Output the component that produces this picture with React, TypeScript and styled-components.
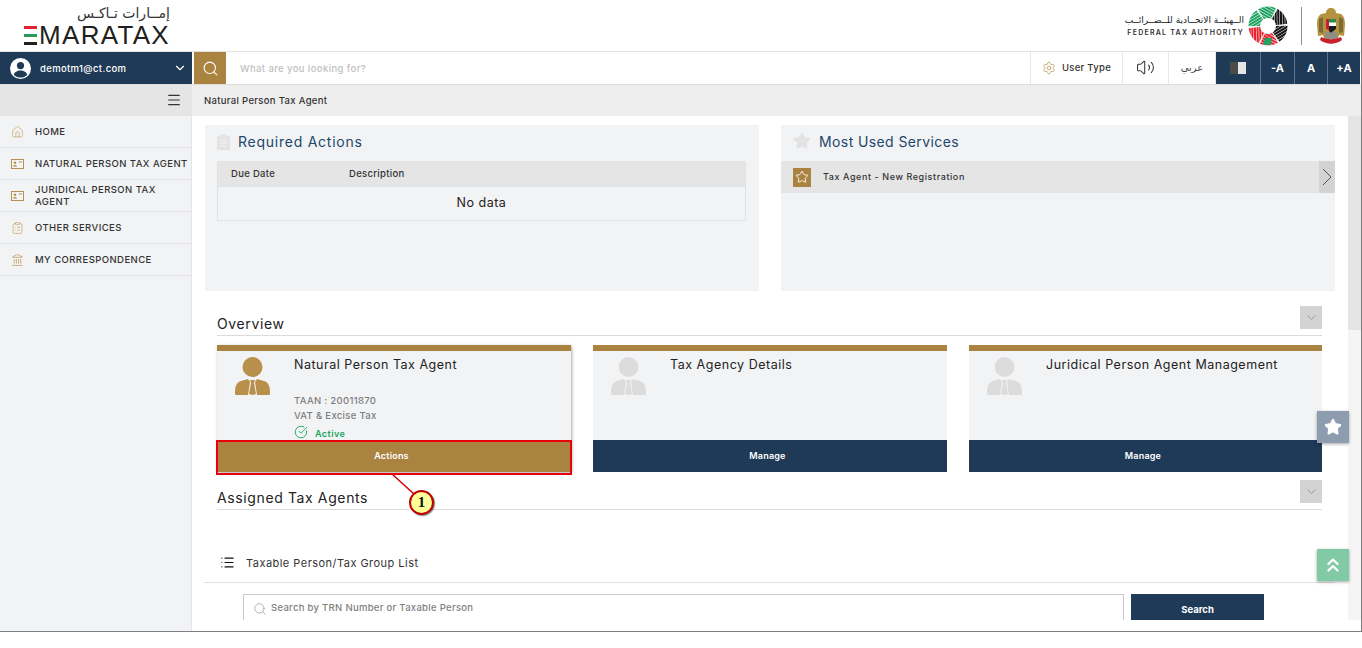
import React from 'react';
import styled, { createGlobalStyle } from 'styled-components';
import {
  Search,
  Settings,
  Volume2,
  ChevronDown,
  Menu,
  Home,
  ClipboardList,
  Landmark,
  List,
  CircleCheckBig,
  Star,
  ChevronsUp,
} from 'lucide-react';

const NAVY = '#1f3a57';
const GOLD = '#ab8340';
const FONT = `Inter, "Open Sans", "Liberation Sans", sans-serif`;
const ARABIC = `"DejaVu Sans", sans-serif`;

const GlobalStyle = createGlobalStyle`
  html, body {
    margin: 0;
    padding: 0;
    background: #fff;
    font-family: ${FONT};
    overflow: hidden;
  }
  * { box-sizing: border-box; }
`;

const Frame = styled.div`
  position: relative;
  width: 1362px;
  height: 632px;
  display: flex;
  flex-direction: column;
  border-bottom: 1px solid #808080;
  border-right: 1px solid #808080;
  overflow: hidden;
`;

const Header = styled.header`
  height: 52px;
  flex: none;
  display: flex;
  justify-content: space-between;
  padding: 0 15px 0 24px;
  border-bottom: 1px solid #e2e2e2;
`;

const LogoBlock = styled.div`
  width: 146px;
  display: flex;
  flex-direction: column;
  align-items: flex-end;
`;

const LogoArabic = styled.div`
  font-family: ${ARABIC};
  font-size: 14px;
  line-height: 14px;
  margin-top: 6px;
  height: 19px;
  color: #333;
`;

const LogoLatin = styled.div`
  display: flex;
  align-items: center;
  width: 146px;
  height: 20px;
  font-family: "Liberation Sans", sans-serif;
  font-size: 26px;
  line-height: 20px;
  letter-spacing: 1.3px;
  color: #231f20;
  white-space: nowrap;
`;

const Stripes = styled.span`
  display: inline-flex;
  flex-direction: column;
  justify-content: space-between;
  width: 14px;
  height: 19px;
  margin-right: 2px;
`;

const Stripe = styled.i<{ $c: string }>`
  display: block;
  height: 3px;
  background: ${p => p.$c};
`;

const AuthorityBlock = styled.div`
  display: flex;
  align-items: center;
`;

const AuthorityText = styled.div`
  display: flex;
  flex-direction: column;
  align-items: flex-end;
  width: 118px;
  margin-right: 4px;
  padding-top: 1px;
`;

const AuthorityArabic = styled.div`
  font-family: ${ARABIC};
  font-size: 9px;
  line-height: 13px;
  color: #222;
  white-space: nowrap;
`;

const AuthorityLatin = styled.div`
  font-size: 7px;
  font-weight: 600;
  line-height: 11px;
  letter-spacing: 1.25px;
  color: #333;
  white-space: nowrap;
`;

const HeaderRule = styled.div`
  width: 1px;
  height: 38px;
  background: #8d8d8d;
  margin: 0 14px 0 13px;
`;

const Bar = styled.div`
  position: relative;
  height: 32px;
  flex: none;
  display: flex;
  background: #fff;
  box-shadow: 0 1px 0 #dcdcdc;
`;

const UserBox = styled.div`
  width: 192px;
  flex: none;
  background: ${NAVY};
  color: #fff;
  display: flex;
  align-items: center;
  padding: 0 5px 0 10px;
  font-size: 9.5px;
  font-weight: 500;
  letter-spacing: 0.35px;
`;

const UserName = styled.span`
  margin-left: 9px;
  flex: 1;
`;

const SearchButton = styled.div`
  width: 32px;
  margin-left: 2px;
  flex: none;
  background: ${GOLD};
  display: flex;
  align-items: center;
  justify-content: center;
  color: #fff;
`;

const SearchPrompt = styled.div`
  flex: 1;
  display: flex;
  align-items: center;
  padding-left: 14px;
  font-size: 9.5px;
  font-weight: 500;
  letter-spacing: 0.4px;
  color: #c0c0c0;
`;

const ToolCell = styled.div<{ $w: number }>`
  width: ${p => p.$w}px;
  flex: none;
  display: flex;
  align-items: center;
  justify-content: center;
  gap: 6px;
  padding-bottom: 1px;
  border-left: 1px solid #e6e6e6;
  font-size: 9.5px;
  font-weight: 500;
  letter-spacing: 0.3px;
  color: #333;
`;

const ArabicLabel = styled.span`
  font-family: ${ARABIC};
  font-size: 10px;
  color: #444;
`;

const ToolDark = styled.div<{ $w: number; $split?: boolean }>`
  width: ${p => p.$w}px;
  flex: none;
  display: flex;
  align-items: center;
  justify-content: center;
  background: ${NAVY};
  color: #fff;
  font-size: 11px;
  font-weight: 700;
  border-left: 1px solid ${p => (p.$split ? '#5d7389' : '#e6e6e6')};
`;

const ContrastIcon = styled.span`
  display: flex;
  width: 16px;
  height: 12px;
`;

const ContrastHalf = styled.i<{ $c: string }>`
  display: block;
  flex: 1;
  background: ${p => p.$c};
`;

const BarEnd = styled.div`
  width: 1px;
  flex: none;
`;

const Body = styled.div`
  flex: 1;
  display: flex;
  min-height: 0;
`;

const Sidebar = styled.aside`
  width: 192px;
  flex: none;
  background: #f2f3f5;
  border-right: 1px solid #e4e4e4;
`;

const SidebarTop = styled.div`
  height: 32px;
  background: #e5e5e5;
  display: flex;
  align-items: center;
  justify-content: flex-end;
  padding-right: 9px;
  color: #333;
`;

const NavItem = styled.div`
  height: 32px;
  display: flex;
  align-items: center;
  padding-left: 11px;
  border-bottom: 1px solid #e4e4e4;
  color: #c7a368;
`;

const NavIcon = styled.span`
  width: 13px;
  display: flex;
  justify-content: center;
  flex: none;
  margin-right: 11px;
`;

const NavLabel = styled.span`
  font-size: 9.5px;
  line-height: 11.5px;
  font-weight: 500;
  letter-spacing: 0.44px;
  color: #333;
  white-space: pre;
`;

const Main = styled.main`
  flex: 1;
  min-width: 0;
  display: flex;
  flex-direction: column;
`;

const Breadcrumb = styled.div`
  height: 32px;
  flex: none;
  background: #eeeeee;
  display: flex;
  align-items: center;
  padding: 1px 0 0 12px;
  font-size: 9.5px;
  font-weight: 500;
  letter-spacing: 0.32px;
  color: #333;
`;

const Viewport = styled.div`
  height: 504px;
  flex: none;
  display: flex;
`;

const Content = styled.div`
  flex: 1;
  min-width: 0;
  overflow: hidden;
  padding: 9px 13px 0 13px;
`;

const Scrollbar = styled.div`
  width: 13px;
  flex: none;
  background: #f5f5f5;
`;

const ScrollThumb = styled.div`
  height: 214px;
  background: #e4e4e4;
`;

const PanelRow = styled.div`
  display: grid;
  grid-template-columns: 554px 554px;
  justify-content: space-between;
`;

const Panel = styled.section`
  height: 166px;
  background: #f2f3f5;
`;

const PanelHead = styled.div<{ $spacing: number }>`
  height: 36px;
  display: flex;
  align-items: center;
  padding: 0 0 4px 12px;
  gap: 8px;
  font-size: 14px;
  font-weight: 400;
  letter-spacing: ${p => p.$spacing}px;
  color: #24466b;
`;

const ReqTable = styled.div`
  margin: 0 13px 0 12px;
  border: 1px solid #dfe2e8;
  border-top: none;
`;

const ReqHead = styled.div`
  height: 26px;
  background: #e5e5e5;
  display: flex;
  align-items: center;
  font-size: 9.5px;
  font-weight: 500;
  letter-spacing: 0.3px;
  color: #333;
  border-bottom: 1px solid #dde1e8;
`;

const ReqCol = styled.span<{ $w: number }>`
  width: ${p => p.$w}px;
  padding-left: 13px;
`;

const NoData = styled.div`
  height: 33px;
  display: flex;
  align-items: center;
  justify-content: center;
  padding-bottom: 2px;
  font-size: 12.5px;
  letter-spacing: 0.5px;
  color: #222;
`;

const ServiceRow = styled.div`
  height: 32px;
  background: #e5e5e5;
  display: flex;
  align-items: center;
  padding-left: 12px;
  font-size: 9px;
  font-weight: 500;
  letter-spacing: 0.58px;
  color: #333;
`;

const ServiceBadge = styled.span`
  width: 18px;
  height: 19px;
  background: ${GOLD};
  display: flex;
  align-items: center;
  justify-content: center;
  margin-right: 12px;
  color: #fff;
`;

const ServiceName = styled.span`
  flex: 1;
  margin-bottom: 1px;
`;

const ServiceArrow = styled.span`
  width: 16px;
  height: 100%;
  background: #d3d3d3;
  display: flex;
  align-items: center;
  justify-content: center;
  color: #555;
`;

const SectionHead = styled.div<{ $top: number }>`
  margin: ${p => p.$top}px 13px 0 12px;
  height: 30px;
  display: flex;
  align-items: flex-end;
  justify-content: space-between;
  padding-bottom: 4px;
  border-bottom: 1px solid #dcdcdc;
  font-size: 14px;
  letter-spacing: 0.62px;
  color: #222;
  line-height: 16px;
`;

const SectionTitle = styled.span`
  margin-bottom: -1px;
`;

const Collapse = styled.span`
  width: 22px;
  height: 23px;
  background: #d3d3d3;
  display: flex;
  align-items: center;
  justify-content: center;
  color: #777;
  margin-bottom: 2px;
`;

const Cards = styled.div`
  margin: 9px 13px 0 12px;
  display: grid;
  grid-template-columns: 354px 354px 353px;
  column-gap: 22px;
`;

const Card = styled.article<{ $raised?: boolean }>`
  height: 127px;
  display: flex;
  flex-direction: column;
  border-top: 6px solid ${GOLD};
  background: #f2f3f5;
  box-shadow: ${p => (p.$raised ? '1px 1px 3px rgba(0,0,0,.35)' : 'none')};
`;

const CardBody = styled.div`
  flex: 1;
  min-height: 0;
  display: flex;
  padding: 6px 0 0 18px;
`;

const CardAvatar = styled.div<{ $c: string }>`
  width: 35px;
  flex: none;
  color: ${p => p.$c};
`;

const CardInfo = styled.div`
  margin-left: 24px;
  display: flex;
  flex-direction: column;
`;

const CardTitle = styled.div`
  font-size: 12.5px;
  line-height: 16px;
  letter-spacing: 0.52px;
  color: #222;
`;

const CardMeta = styled.div<{ $top: number }>`
  margin-top: ${p => p.$top}px;
  font-size: 9.5px;
  line-height: 15px;
  font-weight: 500;
  letter-spacing: 0.32px;
  color: #7d7d7d;
`;

const CardStatus = styled.div`
  display: flex;
  align-items: center;
  gap: 7px;
  font-size: 9px;
  font-weight: 600;
  letter-spacing: 0.45px;
  color: #1ba85f;
  line-height: 14px;
`;

const StatusLabel = styled.span`
  margin-top: 4px;
`;

const CardButton = styled.div<{ $c: string }>`
  height: 32px;
  flex: none;
  background: ${p => p.$c};
  color: #fff;
  display: flex;
  align-items: center;
  justify-content: center;
  padding: 0 5px 1px 0;
  font-size: 9px;
  font-weight: 600;
  letter-spacing: 0.2px;
`;

const ListRow = styled.div`
  margin: 35px 0 0 -1px;
  height: 38px;
  display: flex;
  align-items: center;
  padding: 0 0 2px 16px;
  gap: 11px;
  border-bottom: 1px solid #e3e3e3;
  font-size: 11px;
  letter-spacing: 0.47px;
  color: #333;
`;

const SearchRow = styled.div`
  margin: 11px 0 0 38px;
  display: flex;
  gap: 7px;
`;

const SearchField = styled.div`
  width: 881px;
  height: 32px;
  border: 1px solid #c9c9c9;
  display: flex;
  align-items: flex-start;
  padding: 7px 0 0 9px;
  gap: 4px;
  color: #808080;
  font-size: 9.5px;
  font-weight: 500;
  letter-spacing: 0.3px;
`;

const SearchSubmit = styled.div`
  width: 133px;
  height: 32px;
  background: ${NAVY};
  color: #fff;
  font-size: 9.5px;
  font-weight: 700;
  display: flex;
  justify-content: center;
  padding-top: 10px;
`;

const FloatButton = styled.div<{ $c: string; $top: number }>`
  position: absolute;
  left: 1317px;
  top: ${p => p.$top}px;
  width: 32px;
  height: 32px;
  background: ${p => p.$c};
  color: #fff;
  display: flex;
  align-items: center;
  justify-content: center;
  box-shadow: 0 1px 3px rgba(0, 0, 0, 0.35);
`;

const Highlight = styled.div`
  position: absolute;
  left: 216px;
  top: 440px;
  width: 356px;
  height: 35px;
  border: 2px solid #e8000d;
`;

const CalloutLine = styled.svg`
  position: absolute;
  left: 390px;
  top: 472px;
`;

const CalloutBadge = styled.div`
  position: absolute;
  left: 409px;
  top: 490px;
  width: 25px;
  height: 25px;
  border-radius: 50%;
  border: 2px solid #c00000;
  background: #ffff99;
  box-shadow: 1px 1px 1px rgba(0, 0, 0, 0.5);
  display: flex;
  align-items: center;
  justify-content: center;
  font-family: "Liberation Serif", serif;
  font-size: 15px;
  font-weight: 700;
  color: #111;
`;

// FTA ring: six wedges of parallel stripes, clockwise from the top
const FtaMark = () => {
  const wedges = ['#1fa463', '#151515', '#151515', '#e7222e', '#e7222e', '#1fa463'];
  return (
    <svg width="40" height="40" viewBox="-20 -20 40 40">
      <defs>
        <mask id="fta-ring">
          <circle r="19.5" fill="#fff" />
          <circle r="8" fill="#000" />
        </mask>
        <clipPath id="fta-wedge">
          <path d="M0 0L-15 -25L11 -25z" />
        </clipPath>
      </defs>
      <g mask="url(#fta-ring)">
        {wedges.map((c, i) => (
          <g key={i} transform={`rotate(${i * 60})`}>
            <g clipPath="url(#fta-wedge)">
              {[6, 9, 12, 15, 18, 21, 24].map(y => (
                <path key={y} d={`M-20 ${-y - 11}L20 ${-y + 11}`} stroke={c} strokeWidth="2.1" />
              ))}
            </g>
          </g>
        ))}
        <path d="M-3 12L4 12L3 19L-5 19z" fill="#1fa463" />
      </g>
    </svg>
  );
};

const Emblem = () => (
  <svg width="30" height="38" viewBox="0 0 30 38">
    <path d="M15 1c3 0 5 2 5 5l5 1c3 2 4 6 4 10l-1 12-5-1-1 4H8l-1-4-5 1-1-12c0-4 1-8 4-10l5-1c0-3 2-5 5-5z" fill="#b3933f" />
    <path d="M3 12l4-2v16l-4-1zM27 12l-4-2v16l4-1z" fill="#7d6a32" />
    <path d="M9 25h12v7H9z" fill="#8e8e83" />
    <path d="M10 12h10v10l-5 4-5-4z" fill="#fff" />
    <path d="M10 12h3v12l-3-2z" fill="#c8202d" />
    <path d="M13 12h7v3.500h-7z" fill="#2c8c4a" />
    <path d="M13 19h7v3l-5 4-2-1.500z" fill="#1b1b1b" />
    <path d="M5 30c6 3 14 3 20 0l1 3c-7 5-15 5-22 0z" fill="#c8202d" />
  </svg>
);

const IdCard = () => (
  <svg width="13" height="10" viewBox="0 0 13 10">
    <rect x=".5" y=".5" width="12" height="9" fill="none" stroke="#b7904f" />
    <circle cx="4" cy="3.8" r="1.3" fill="#b7904f" />
    <path d="M2 7.6c0-2 4-2 4 0z" fill="#b7904f" />
    <path d="M8 3h3" stroke="#b7904f" />
  </svg>
);

const UserCircle = () => (
  <svg width="21" height="21" viewBox="0 0 21 21">
    <circle cx="10.5" cy="10.5" r="10.5" fill="#fff" />
    <circle cx="10.5" cy="7.6" r="3.6" fill={NAVY} />
    <path d="M3.8 17c.6-6 12.8-6 13.4 0-3.6 3.4-9.8 3.4-13.4 0z" fill={NAVY} />
  </svg>
);

const PersonTie = () => (
  <svg width="35" height="39" viewBox="0 0 35 39">
    <circle cx="17.5" cy="10" r="10" fill="currentColor" />
    <path
      d="M1 38c-1 0-1-1-1-3 0-6 2-10 6-11l7-2 2 3-2 13zM34 38c1 0 1-1 1-3 0-6-2-10-6-11l-7-2-2 3 2 13z"
      fill="currentColor"
    />
    <path d="M15 23h5l-1 3 2 11-3.500 1-3.500-1 2-11z" fill="currentColor" />
  </svg>
);

const TaskIcon = () => (
  <svg width="13" height="17" viewBox="0 0 13 17">
    <path d="M0 3h3.500V1.500h6V3H13v14H0z" fill="#e3e3e3" />
    <path d="M3 7h7M3 10h7M3 13h7" stroke="#f2f3f5" />
  </svg>
);

const ArrowGlyph = () => (
  <svg width="10" height="18" viewBox="0 0 10 18">
    <path d="M1 1l8 8-8 8" fill="none" stroke="currentColor" strokeWidth="1" />
  </svg>
);

const App = () => (
  <Frame>
    <GlobalStyle />
    <Header>
      <LogoBlock>
        <LogoArabic>إمــارات تـاكـس</LogoArabic>
        <LogoLatin>
          <Stripes>
            <Stripe $c="#e7222e" />
            <Stripe $c="#2c9a5a" />
            <Stripe $c="#231f20" />
          </Stripes>
          MARATAX
        </LogoLatin>
      </LogoBlock>
      <AuthorityBlock>
        <AuthorityText>
          <AuthorityArabic>الــهيئــة الاتحــادية للــضــرائــب</AuthorityArabic>
          <AuthorityLatin>FEDERAL TAX AUTHORITY</AuthorityLatin>
        </AuthorityText>
        <FtaMark />
        <HeaderRule />
        <Emblem />
      </AuthorityBlock>
    </Header>

    <Bar>
      <UserBox>
        <UserCircle />
        <UserName>demotm1@ct.com</UserName>
        <ChevronDown size={14} strokeWidth={2} />
      </UserBox>
      <SearchButton>
        <Search size={17} strokeWidth={1.5} />
      </SearchButton>
      <SearchPrompt>What are you looking for?</SearchPrompt>
      <ToolCell $w={92}>
        <Settings size={14} strokeWidth={1.2} color="#b7904f" />
        User Type
      </ToolCell>
      <ToolCell $w={46}>
        <Volume2 size={19} strokeWidth={1.3} />
      </ToolCell>
      <ToolCell $w={47}>
        <ArabicLabel>عربي</ArabicLabel>
      </ToolCell>
      <ToolDark $w={45}>
        <ContrastIcon>
          <ContrastHalf $c="#4a4a4a" />
          <ContrastHalf $c="#e5e5e5" />
        </ContrastIcon>
      </ToolDark>
      <ToolDark $w={34} $split>-A</ToolDark>
      <ToolDark $w={33} $split>A</ToolDark>
      <ToolDark $w={33} $split>+A</ToolDark>
      <BarEnd />
    </Bar>

    <Body>
      <Sidebar>
        <SidebarTop>
          <Menu size={16} strokeWidth={1.7} />
        </SidebarTop>
        <NavItem>
          <NavIcon><Home size={14} strokeWidth={1.3} /></NavIcon>
          <NavLabel>HOME</NavLabel>
        </NavItem>
        <NavItem>
          <NavIcon><IdCard /></NavIcon>
          <NavLabel>NATURAL PERSON TAX AGENT</NavLabel>
        </NavItem>
        <NavItem>
          <NavIcon><IdCard /></NavIcon>
          <NavLabel>{'JURIDICAL PERSON TAX\nAGENT'}</NavLabel>
        </NavItem>
        <NavItem>
          <NavIcon><ClipboardList size={14} strokeWidth={1.3} /></NavIcon>
          <NavLabel>OTHER SERVICES</NavLabel>
        </NavItem>
        <NavItem>
          <NavIcon><Landmark size={14} strokeWidth={1.6} /></NavIcon>
          <NavLabel>MY CORRESPONDENCE</NavLabel>
        </NavItem>
      </Sidebar>

      <Main>
        <Breadcrumb>Natural Person Tax Agent</Breadcrumb>
        <Viewport>
          <Content>
            <PanelRow>
              <Panel>
                <PanelHead $spacing={0.75}>
                  <TaskIcon />
                  Required Actions
                </PanelHead>
                <ReqTable>
                  <ReqHead>
                    <ReqCol $w={118}>Due Date</ReqCol>
                    <ReqCol $w={200}>Description</ReqCol>
                  </ReqHead>
                  <NoData>No data</NoData>
                </ReqTable>
              </Panel>
              <Panel>
                <PanelHead $spacing={0.4}>
                  <Star size={18} color="#e3e3e3" fill="#e3e3e3" />
                  Most Used Services
                </PanelHead>
                <ServiceRow>
                  <ServiceBadge><Star size={14} strokeWidth={1.5} /></ServiceBadge>
                  <ServiceName>Tax Agent - New Registration</ServiceName>
                  <ServiceArrow><ArrowGlyph /></ServiceArrow>
                </ServiceRow>
              </Panel>
            </PanelRow>

            <SectionHead $top={15}>
              <SectionTitle>Overview</SectionTitle>
              <Collapse><ChevronDown size={15} strokeWidth={1} /></Collapse>
            </SectionHead>
            <Cards>
              <Card $raised>
                <CardBody>
                  <CardAvatar $c="#b98f4c"><PersonTie /></CardAvatar>
                  <CardInfo>
                    <CardTitle>Natural Person Tax Agent</CardTitle>
                    <CardMeta $top={20}>
                      TAAN : 20011870
                      <br />
                      VAT &amp; Excise Tax
                    </CardMeta>
                    <CardStatus>
                      <CircleCheckBig size={14} strokeWidth={1.6} />
                      <StatusLabel>Active</StatusLabel>
                    </CardStatus>
                  </CardInfo>
                </CardBody>
                <CardButton $c={GOLD}>Actions</CardButton>
              </Card>
              <Card>
                <CardBody>
                  <CardAvatar $c="#dcdcdc"><PersonTie /></CardAvatar>
                  <CardInfo><CardTitle>Tax Agency Details</CardTitle></CardInfo>
                </CardBody>
                <CardButton $c={NAVY}>Manage</CardButton>
              </Card>
              <Card>
                <CardBody>
                  <CardAvatar $c="#dcdcdc"><PersonTie /></CardAvatar>
                  <CardInfo><CardTitle>Juridical Person Agent Management</CardTitle></CardInfo>
                </CardBody>
                <CardButton $c={NAVY}>Manage</CardButton>
              </Card>
            </Cards>

            <SectionHead $top={8}>
              <SectionTitle>Assigned Tax Agents</SectionTitle>
              <Collapse><ChevronDown size={15} strokeWidth={1} /></Collapse>
            </SectionHead>

            <ListRow>
              <List size={15} strokeWidth={1.8} color="#111" />
              Taxable Person/Tax Group List
            </ListRow>
            <SearchRow>
              <SearchField>
                <Search size={14} strokeWidth={1} />
                Search by TRN Number or Taxable Person
              </SearchField>
              <SearchSubmit>Search</SearchSubmit>
            </SearchRow>
          </Content>
          <Scrollbar><ScrollThumb /></Scrollbar>
        </Viewport>
      </Main>
    </Body>

    <FloatButton $c="#8d9cae" $top={411}><Star size={18} fill="#fff" /></FloatButton>
    <FloatButton $c="#82c9a5" $top={549}><ChevronsUp size={22} strokeWidth={2.4} /></FloatButton>

    <Highlight />
    <CalloutLine width="30" height="30" viewBox="0 0 30 30">
      <path d="M2 2L24 22" stroke="#d40000" strokeWidth="1.5" />
    </CalloutLine>
    <CalloutBadge>1</CalloutBadge>
  </Frame>
);

export default App;
